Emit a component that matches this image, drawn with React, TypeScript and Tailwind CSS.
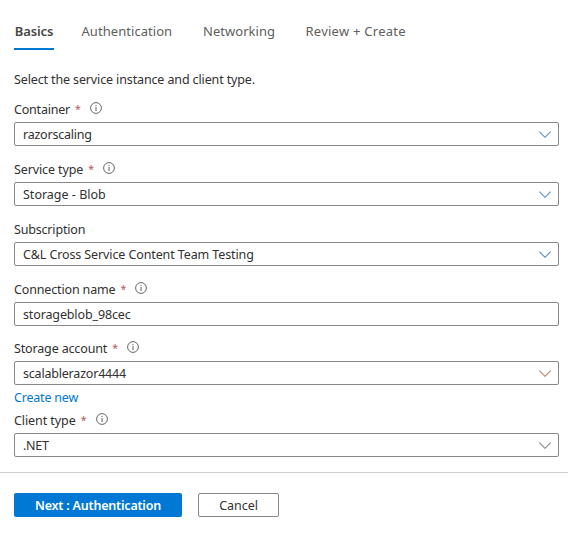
function Info() {
  return (
    <svg className="ml-[9px] size-3 shrink-0 -translate-y-[2px]" viewBox="0 0 12 12" fill="none">
      <circle cx="6" cy="6" r="5.4" stroke="#605e5c" strokeWidth="0.95" />
      <path d="M6 5V9" stroke="#605e5c" strokeWidth="1" />
      <path d="M6 3v1.1" stroke="#605e5c" strokeWidth="1" />
    </svg>
  );
}

function Chevron({ color }: { color: string }) {
  return (
    <svg className="h-[7px] w-3 shrink-0" viewBox="0 0 12 7" fill="none">
      <path d="M0.4 0.7L6 6.3L11.6 0.7" stroke={color} strokeWidth="1.1" />
    </svg>
  );
}

type FieldProps = {
  label: string;
  labelClass: string;
  value: string;
  valueClass: string;
  required?: boolean;
  chevron?: string;
};

function Field({ label, labelClass, value, valueClass, required, chevron }: FieldProps) {
  return (
    <div>
      <div className="flex h-6 items-center">
        <span className={labelClass}>{label}</span>
        {required && (
          <>
            <span className="ml-[5px] w-[6px] pb-[2px] text-[10.5px] leading-4 text-[#b5555a]">*</span>
            <Info />
          </>
        )}
      </div>
      <div className="flex h-6 items-center justify-between rounded-[2px] border border-[#8a8886] pt-px pr-[7px] pl-2">
        <span className={valueClass}>{value}</span>
        {chevron && <Chevron color={chevron} />}
      </div>
    </div>
  );
}

export default function App() {
  return (
    <main className="h-[534px] w-[568px] overflow-hidden bg-white font-['Noto_Sans','Open_Sans',sans-serif] text-[12.5px] leading-4 whitespace-nowrap text-[#323130]">
      <nav className="flex h-[50px] gap-[27.5px] pt-[22px] pl-[14px] text-[13px] text-[#605e5c]">
        <div className="h-7 w-10 border-b-2 border-[#0078d4] text-center leading-[18px] font-semibold tracking-[-0.1px] text-[#484644]">
          Basics
        </div>
        <div className="w-[94px] leading-[18px] tracking-[0.05px]">Authentication</div>
        <div className="w-[75px] leading-[18px] tracking-[0.03px]">Networking</div>
        <div className="leading-[18px] tracking-[0.25px]">Review + Create</div>
      </nav>
      <section className="pr-[9px] pl-[14px]">
        <p className="pt-[22px] pb-[10px] tracking-[-0.13px]">Select the service instance and client type.</p>
        <div className="flex flex-col gap-3">
          <Field label="Container" labelClass="tracking-[-0.2px]" value="razorscaling" valueClass="tracking-[-0.23px]" required chevron="#5b93c4" />
          <Field label="Service type" labelClass="tracking-[-0.12px]" value="Storage - Blob" valueClass="" required chevron="#5b93c4" />
          <Field label="Subscription" labelClass="tracking-[-0.18px]" value="C&L Cross Service Content Team Testing" valueClass="tracking-[-0.11px]" chevron="#5b93c4" />
          <Field label="Connection name" labelClass="tracking-[-0.15px]" value="storageblob_98cec" valueClass="tracking-[-0.13px]" required />
        </div>
        <div className="pt-[11px]">
          <Field label="Storage account" labelClass="tracking-[-0.15px]" value="scalablerazor4444" valueClass="tracking-[-0.2px]" required chevron="#b38466" />
        </div>
        <div className="flex h-6 items-center pt-px tracking-[-0.2px] text-[#0078d4]">Create new</div>
        <Field label="Client type" labelClass="tracking-[-0.08px]" value=".NET" valueClass="tracking-[-0.3px]" required chevron="#8a8886" />
      </section>
      <footer className="mt-[15px] flex gap-4 border-t border-[#d2d0ce] pt-5 pl-[14px]">
        <button className="h-6 w-[168px] rounded-[2px] bg-[#0078d4] pt-px font-semibold tracking-[-0.2px] text-white">Next : Authentication</button>
        <button className="h-6 w-[81px] rounded-[2px] border border-[#8a8886] pt-px tracking-[-0.05px]">Cancel</button>
      </footer>
    </main>
  );
}
